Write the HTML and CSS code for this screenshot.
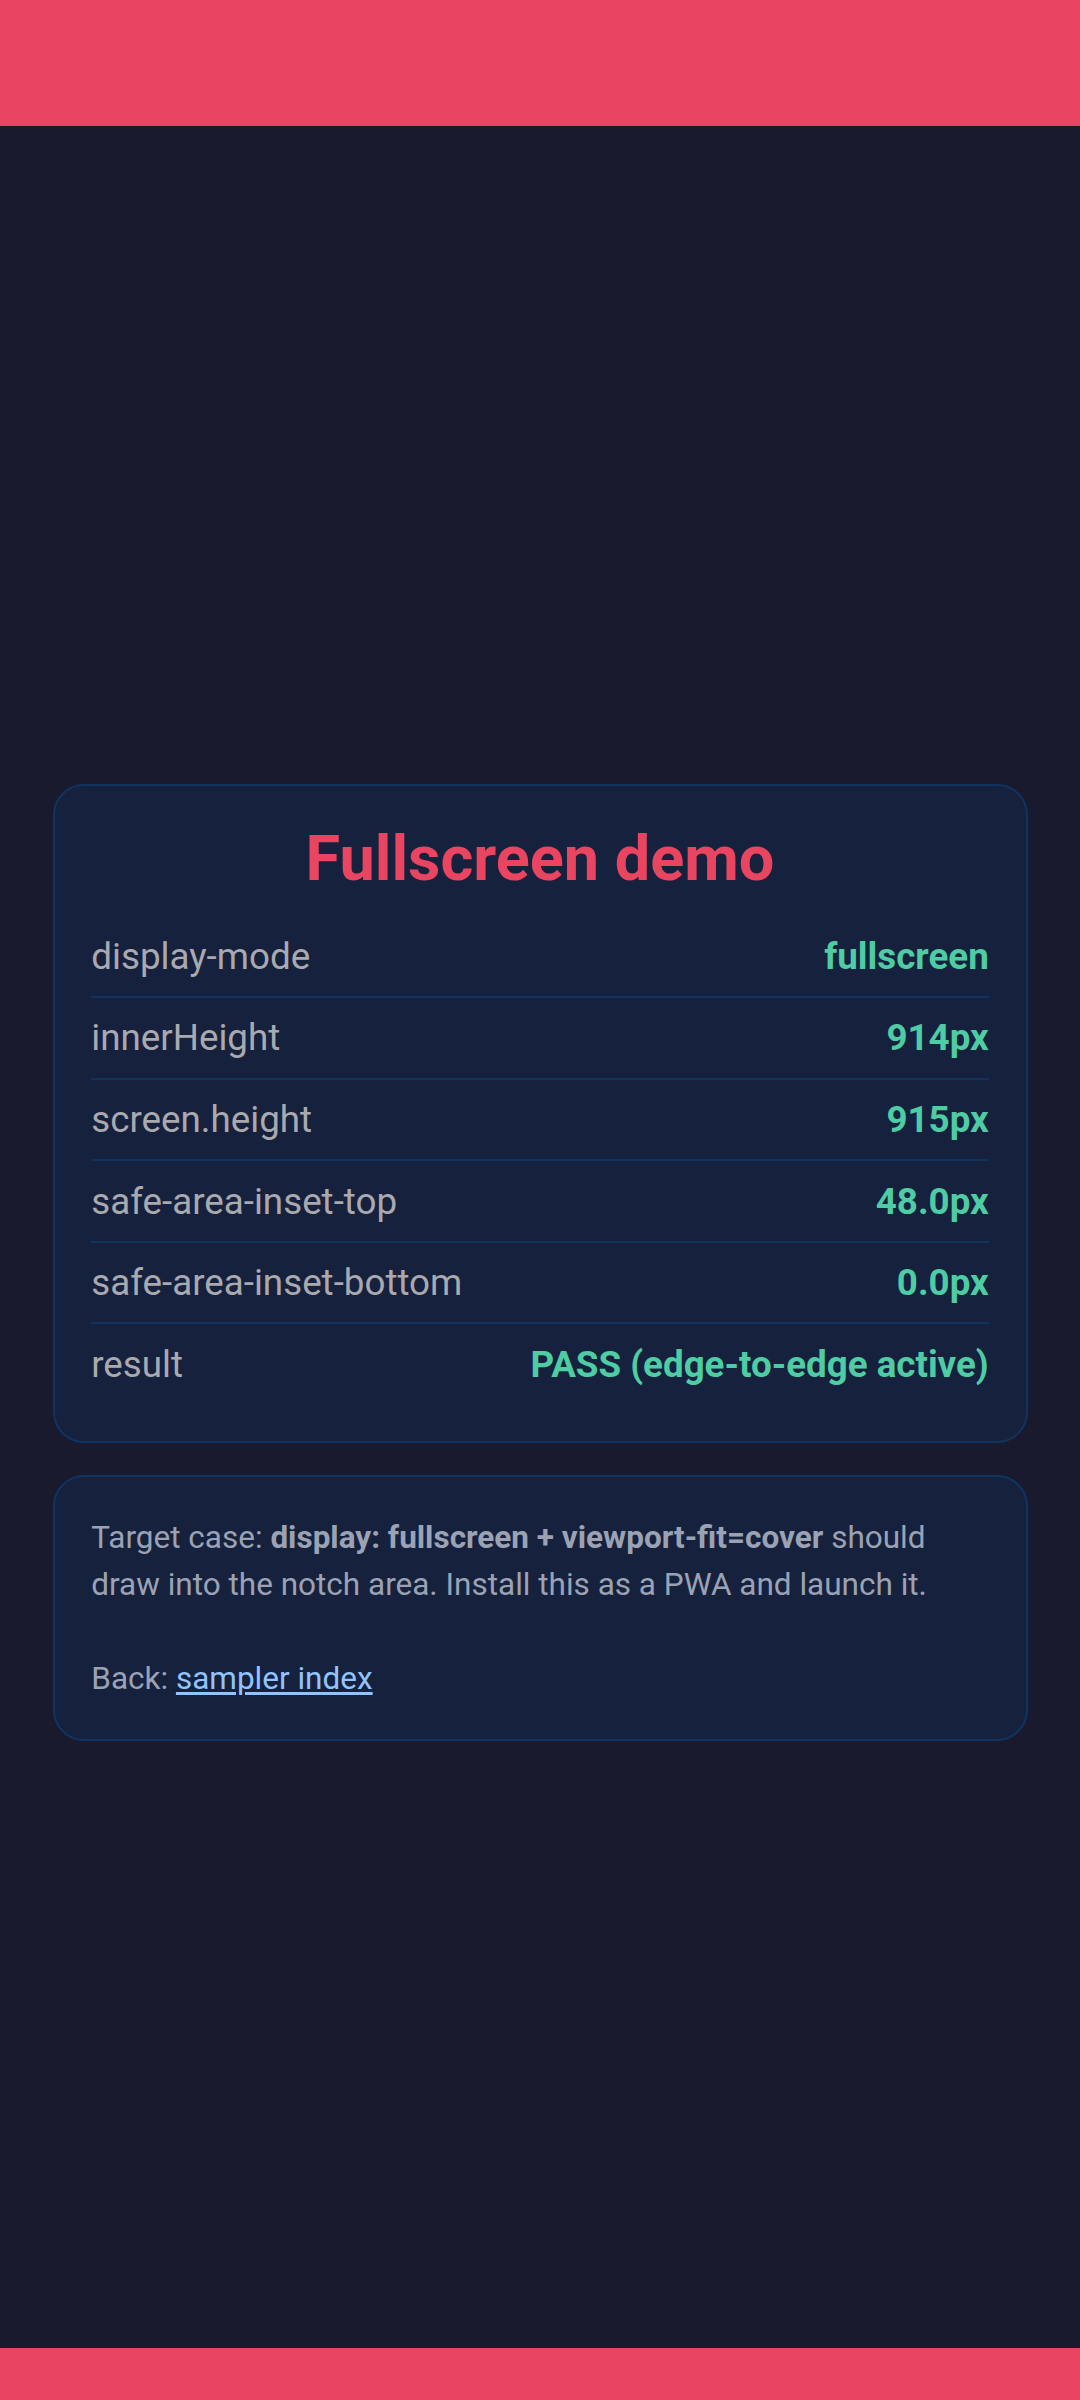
FILE: index.html
```html
<!DOCTYPE html>
<html lang="en">
<head>
<meta charset="utf-8">
<meta name="viewport" content="width=device-width, initial-scale=1">
<title>Fullscreen demo</title>
<link rel="stylesheet" href="styles.css">
</head>
<body>
  <div class="inset inset-top"></div>
  <main class="main">
    <section class="card">
      <h1 class="title">Fullscreen demo</h1>
      <div class="rows">
        <div class="row"><span class="label">display-mode</span><span class="value">fullscreen</span></div>
        <div class="row"><span class="label">innerHeight</span><span class="value">914px</span></div>
        <div class="row"><span class="label">screen.height</span><span class="value">915px</span></div>
        <div class="row"><span class="label">safe-area-inset-top</span><span class="value">48.0px</span></div>
        <div class="row"><span class="label">safe-area-inset-bottom</span><span class="value">0.0px</span></div>
        <div class="row"><span class="label">result</span><span class="value">PASS (edge-to-edge active)</span></div>
      </div>
    </section>
    <section class="card note">
      <p class="note-text">Target case: <strong>display: fullscreen + viewport-fit=cover</strong> should draw into the notch area. Install this as a PWA and launch it.</p>
      <p class="note-text back">Back: <a class="link" href="#">sampler index</a></p>
    </section>
  </main>
  <div class="inset inset-bottom"></div>
</body>
</html>
```
FILE: styles.css
```css
html, body {
  margin: 0;
  padding: 0;
}

body {
  min-height: 2400px;
  display: flex;
  flex-direction: column;
  background: #1a1a2e;
  font-family: Roboto, "Noto Sans", "Liberation Sans", sans-serif;
}

.inset {
  background: #e94560;
  flex: none;
}

.inset-top {
  height: 126px;
}

.inset-bottom {
  height: 52px;
}

.main {
  flex: 1;
  display: flex;
  flex-direction: column;
  justify-content: center;
  padding: 51px 52.5px 0;
  gap: 32px;
}

.card {
  background: #16213e;
  border: 2px solid #0f3460;
  border-radius: 31px;
  padding: 36.75px;
}

.title {
  margin: 0 0 21px;
  text-align: center;
  color: #e94560;
  font-size: 63px;
  font-weight: 700;
  line-height: normal;
}

.row {
  display: flex;
  justify-content: space-between;
  align-items: baseline;
  padding: 18.3px 0;
  font-size: 36.75px;
  line-height: normal;
  border-bottom: 2px solid #0f3460;
}

.row:last-child {
  border-bottom: none;
}

.label {
  color: #a9a9ae;
}

.value {
  color: #4ecca3;
  font-weight: 700;
}

.note-text {
  margin: 0;
  font-size: 31.5px;
  line-height: 1.5;
  color: #9ba2b3;
}

.note-text strong {
  font-weight: 700;
}

.back {
  margin-top: 47.25px;
}

.link {
  color: #90c4ff;
  text-decoration: underline;
  text-underline-offset: 3px;
  text-decoration-thickness: 3px;
}
```
